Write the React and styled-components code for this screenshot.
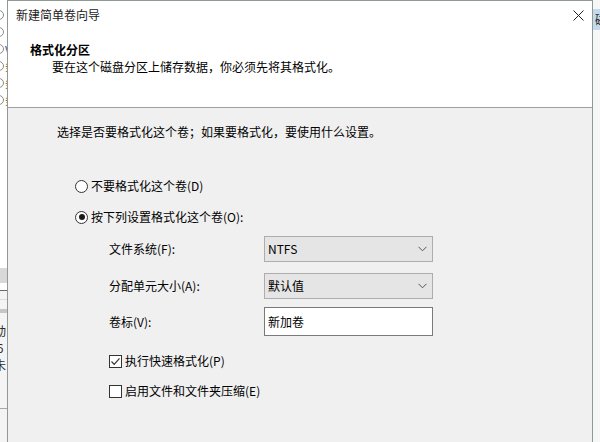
import React from 'react';
import styled, { createGlobalStyle } from 'styled-components';

const GlobalStyle = createGlobalStyle`
    html, body {
        margin: 0;
        padding: 0;
        background: #ffffff;
    }
    body {
        font-family: "Noto Sans CJK SC", "Noto Sans", sans-serif;
        font-size: 12px;
        color: #000;
    }
`;

const Screen = styled.div`
    width: 600px;
    height: 442px;
    display: flex;
    flex-direction: row;
    overflow: hidden;
`;

/* background window peeking out on the left */
const LeftStrip = styled.div`
    width: 7px;
    flex: none;
    display: flex;
    flex-direction: column;
    overflow: hidden;
    background: #ffffff;
`;

const ListItem = styled.div`
    height: 17px;
    flex: none;
    display: flex;
    align-items: center;
    gap: 1px;
    white-space: nowrap;
    &::before {
        content: '';
        width: 8px;
        height: 8px;
        margin-left: -6px;
        border-radius: 50%;
        border: 1px solid #8a8a8a;
        flex: none;
    }
`;

const ItemText = styled.span`
    font-size: 11px;
    line-height: 14px;
    color: ${p => p.$color || '#333'};
`;

const StripGap = styled.div`
    height: ${p => p.$h}px;
    flex: none;
    background: ${p => p.$bg || 'transparent'};
`;

const StripFragment = styled.div`
    height: 17px;
    flex: none;
    margin-left: -6px;
    font-size: 12px;
    line-height: 17px;
    white-space: nowrap;
    color: #2a2a2a;
`;

const StripLower = styled.div`
    flex: 1;
    display: flex;
    flex-direction: column;
    background: #f4f4f4;
`;

const Dialog = styled.div`
    width: 584px;
    flex: none;
    display: flex;
    flex-direction: column;
    border: 1px solid #8e9a93;
    border-bottom: none;
`;

const Header = styled.div`
    height: 106px;
    flex: none;
    background: #ffffff;
    border-bottom: 1px solid #a0a0a0;
    display: flex;
    flex-direction: column;
`;

const TitleBar = styled.div`
    height: 28px;
    display: flex;
    align-items: center;
    justify-content: space-between;
    padding-left: 8px;
`;

const Title = styled.span`
    line-height: 16px;
    color: #1a1a1a;
`;

const CloseButton = styled.div`
    width: 28px;
    height: 28px;
    display: flex;
    align-items: center;
    justify-content: center;
`;

const Heading = styled.div`
    margin: 13px 0 0 22px;
    font-weight: bold;
    line-height: 16px;
`;

const SubHeading = styled.div`
    margin: 1px 0 0 44px;
    line-height: 16px;
`;

const Body = styled.div`
    flex: 1;
    background: #f0f0f0;
    padding: 16px 0 0 49px;
    display: flex;
    flex-direction: column;
`;

const Intro = styled.div`
    line-height: 16px;
`;

const OptionRow = styled.label`
    height: 20px;
    display: flex;
    align-items: center;
    gap: 3px;
    margin: ${p => p.$mt}px 0 0 ${p => p.$indent}px;
    line-height: 16px;
`;

const Radio = styled.span`
    width: 11px;
    height: 11px;
    border-radius: 50%;
    border: 1px solid #333;
    background: #fff;
    display: flex;
    align-items: center;
    justify-content: center;
    flex: none;
    &::after {
        content: '';
        width: 6px;
        height: 6px;
        border-radius: 50%;
        background: ${p => (p.$checked ? '#1a1a1a' : 'transparent')};
    }
`;

const Checkbox = styled.span`
    width: 11px;
    height: 11px;
    border: 1px solid #333;
    background: #fff;
    display: flex;
    align-items: center;
    justify-content: center;
    flex: none;
`;

const Fields = styled.div`
    display: flex;
    flex-direction: column;
    margin-left: 52px;
`;

const FieldRow = styled.div`
    display: grid;
    grid-template-columns: 155px 169px;
    align-items: center;
    margin-top: ${p => p.$mt}px;
`;

const FieldLabel = styled.span`
    line-height: 16px;
`;

const Select = styled.div`
    height: 24px;
    box-sizing: content-box;
    border: 1px solid #adadad;
    background: #e5e5e5;
    display: flex;
    align-items: center;
    justify-content: space-between;
    padding: 0 5px 0 3px;
    line-height: 16px;
`;

const TextInput = styled.div`
    height: 27px;
    border: 1px solid #7a7a7a;
    background: #ffffff;
    display: flex;
    align-items: center;
    padding-left: 3px;
    line-height: 16px;
`;

/* background window peeking out on the right */
const RightStrip = styled.div`
    flex: 1;
    display: flex;
    flex-direction: column;
    background: #f7f7f7;
    overflow: hidden;
`;

const TabHeader = styled.div`
    margin-top: 9px;
    height: 21px;
    background: #c4d8ee;
    display: flex;
    align-items: center;
    padding-left: 2px;
    white-space: nowrap;
    color: #222;
`;

const Chevron = () => (
    <svg width="9" height="6" viewBox="0 0 9 6">
        <polyline points="0.5,0.8 4.5,4.8 8.5,0.8" fill="none" stroke="#555" strokeWidth="1" />
    </svg>
);

const Check = () => (
    <svg width="11" height="11" viewBox="0 0 11 11">
        <polyline points="1.5,5.5 4.2,8.3 9.5,2.3" fill="none" stroke="#333" strokeWidth="1.2" />
    </svg>
);

const CloseIcon = () => (
    <svg width="11" height="11" viewBox="0 0 11 11">
        <path d="M0.5 0.5 L10.5 10.5 M10.5 0.5 L0.5 10.5" stroke="#222" strokeWidth="1" />
    </svg>
);

const backItems = [
    { text: '' },
    { text: '' },
    { text: 'V', color: '#1f4f9a' },
    { text: '务', color: '#7a4a20' },
    { text: '务', color: '#7a4a20' },
    { text: '务', color: '#7a4a20' },
];

export default function App() {
    return (
        <>
            <GlobalStyle />
            <Screen>
                <LeftStrip>
                    <StripGap $h={6} />
                    {backItems.map((it, i) => (
                        <ListItem key={i}>
                            <ItemText $color={it.color}>{it.text}</ItemText>
                        </ListItem>
                    ))}
                    <StripGap $h={160} />
                    <StripGap $h={15} $bg="#d8d8d8" />
                    <StripGap $h={7} />
                    <StripLower>
                        <StripGap $h={1} $bg="#6a6a6a" />
                        <StripGap $h={8} />
                        <StripGap $h={1} $bg="#dcdcdc" />
                        <StripGap $h={9} />
                        <StripGap $h={4} $bg="#c6c6c6" />
                        <StripGap $h={9} />
                        <StripFragment>动</StripFragment>
                        <StripFragment>&nbsp;6</StripFragment>
                        <StripFragment>未</StripFragment>
                        <StripGap $h={35} />
                        <StripGap $h={1} $bg="#a8a8a8" />
                    </StripLower>
                </LeftStrip>

                <Dialog>
                    <Header>
                        <TitleBar>
                            <Title>新建简单卷向导</Title>
                            <CloseButton><CloseIcon /></CloseButton>
                        </TitleBar>
                        <Heading>格式化分区</Heading>
                        <SubHeading>要在这个磁盘分区上储存数据，你必须先将其格式化。</SubHeading>
                    </Header>

                    <Body>
                        <Intro>选择是否要格式化这个卷；如果要格式化，要使用什么设置。</Intro>

                        <OptionRow $mt={36} $indent={18}>
                            <Radio />
                            不要格式化这个卷(D)
                        </OptionRow>
                        <OptionRow $mt={11} $indent={18}>
                            <Radio $checked />
                            按下列设置格式化这个卷(O):
                        </OptionRow>

                        <Fields>
                            <FieldRow $mt={9}>
                                <FieldLabel>文件系统(F):</FieldLabel>
                                <Select>NTFS<Chevron /></Select>
                            </FieldRow>
                            <FieldRow $mt={11}>
                                <FieldLabel>分配单元大小(A):</FieldLabel>
                                <Select>默认值<Chevron /></Select>
                            </FieldRow>
                            <FieldRow $mt={8}>
                                <FieldLabel>卷标(V):</FieldLabel>
                                <TextInput>新加卷</TextInput>
                            </FieldRow>
                        </Fields>

                        <OptionRow $mt={15} $indent={52}>
                            <Checkbox><Check /></Checkbox>
                            执行快速格式化(P)
                        </OptionRow>
                        <OptionRow $mt={10} $indent={52}>
                            <Checkbox />
                            启用文件和文件夹压缩(E)
                        </OptionRow>
                    </Body>
                </Dialog>

                <RightStrip>
                    <TabHeader>磁</TabHeader>
                </RightStrip>
            </Screen>
        </>
    );
}
